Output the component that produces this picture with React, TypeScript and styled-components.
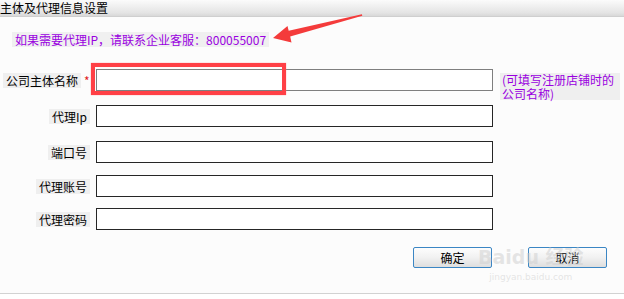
import React from "react";
import styled, { createGlobalStyle } from "styled-components";

const GlobalStyle = createGlobalStyle`
  html, body {
    margin: 0;
    padding: 0;
    background: #ffffff;
  }
  body {
    font-family: "Noto Sans CJK SC", "DejaVu Sans", sans-serif;
    font-size: 12px;
    color: #000;
  }
`;

const Window = styled.div`
  position: relative;
  width: 624px;
  height: 299px;
  overflow: hidden;
  background: #ffffff;
`;

const Panel = styled.div`
  height: 293px;
  background: #fcfcfc;
  border-bottom: 1px solid #d2d2d2;
  display: flex;
  flex-direction: column;
`;

const TitleBar = styled.div`
  height: 16px;
  line-height: 16px;
  font-size: 12px;
  background: linear-gradient(#fbfbfb, #e4e4e4 80%, #d8d8d8);
  border-bottom: 1px solid #cfcfcf;
  white-space: nowrap;
`;

const Notice = styled.div`
  align-self: flex-start;
  margin: 15px 0 0 12px;
  padding: 0 3px;
  height: 15px;
  line-height: 15px;
  font-size: 12px;
  color: #9a00e0;
  background: #f0f0f0;
  white-space: nowrap;
`;

const Form = styled.div`
  display: flex;
  flex-direction: column;
  margin-top: 22px;
`;

const Row = styled.div<{ $top: number }>`
  display: flex;
  align-items: flex-start;
  height: 22px;
  margin-top: ${(p) => p.$top}px;
`;

const LabelCell = styled.div`
  width: 90px;
  height: 22px;
  display: flex;
  align-items: center;
  justify-content: flex-end;
  flex-shrink: 0;
`;

const Label = styled.span`
  display: inline-block;
  background: #efefef;
  height: 15px;
  line-height: 15px;
  padding: 0 3px;
  font-size: 12px;
  white-space: nowrap;
`;

const Star = styled.span`
  color: #e02020;
  font-size: 12px;
  margin-left: 3px;
  width: 6px;
`;

const Input = styled.input<{ $soft?: boolean }>`
  box-sizing: border-box;
  margin: 0 0 0 6px;
  width: 397px;
  height: 22px;
  border: 1px solid ${(p) => (p.$soft ? "#7f7f7f" : "#262626")};
  background: #fff;
  outline: none;
  padding: 0 3px;
  font: inherit;
`;

const Hint = styled.div`
  margin: 4px 0 0 7px;
  width: 116px;
  padding: 0 2px;
  background: #efefef;
  color: #9a00e0;
  font-size: 12px;
  line-height: 13.5px;
`;

const Actions = styled.div`
  display: flex;
  justify-content: flex-end;
  gap: 36px;
  margin-top: 17px;
  padding-right: 17px;
`;

const Button = styled.button`
  box-sizing: border-box;
  width: 79px;
  height: 21px;
  border: 1px solid #3b86c4;
  border-radius: 2px;
  background: linear-gradient(#fdfdfd, #f1f1f1 50%, #dedede);
  font-family: inherit;
  font-size: 12px;
  color: #000;
  padding: 0;
`;

const Highlight = styled.div`
  position: absolute;
  left: 91px;
  top: 63px;
  width: 195px;
  height: 32px;
  box-sizing: border-box;
  border: 4px solid #ff4046;
  box-shadow: 0 0 1px #ff8a8e;
  pointer-events: none;
`;

const Arrow = styled.svg`
  position: absolute;
  left: 0;
  top: 0;
  pointer-events: none;
`;

const Watermark = styled.div`
  position: absolute;
  left: 478px;
  top: 246px;
  color: rgba(205, 205, 205, 0.5);
  font-family: "DejaVu Sans", "Noto Sans CJK SC", sans-serif;
  white-space: nowrap;
  text-align: center;
  pointer-events: none;
`;

const WatermarkLogo = styled.div`
  font-size: 19px;
  line-height: 22px;
  font-weight: bold;
`;

const WatermarkUrl = styled.div`
  font-size: 9px;
  line-height: 11px;
  margin-top: 4px;
`;

const fields = [
  { label: "代理Ip", top: 14 },
  { label: "端口号", top: 14 },
  { label: "代理账号", top: 12 },
  { label: "代理密码", top: 11 },
];

export default function App() {
  return (
    <>
      <GlobalStyle />
      <Window>
        <Panel>
          <TitleBar>主体及代理信息设置</TitleBar>
          <Notice>如果需要代理IP，请联系企业客服：800055007</Notice>
          <Form>
            <Row $top={0}>
              <LabelCell>
                <Label>公司主体名称</Label>
                <Star>*</Star>
              </LabelCell>
              <Input $soft />
              <Hint>(可填写注册店铺时的公司名称)</Hint>
            </Row>
            {fields.map((f) => (
              <Row key={f.label} $top={f.top}>
                <LabelCell>
                  <Label>{f.label}</Label>
                </LabelCell>
                <Input type={f.label === "代理密码" ? "password" : "text"} />
              </Row>
            ))}
          </Form>
          <Actions>
            <Button>确定</Button>
            <Button>取消</Button>
          </Actions>
        </Panel>
        <Highlight />
        <Arrow width="624" height="299" viewBox="0 0 624 299">
          <polygon
            points="273,38 287.5,26 288.7,30.8 361.9,14.2 362.3,15.8 290.2,36.6 291.5,42.4"
            fill="#f43b3b"
          />
        </Arrow>
        <Watermark>
          <WatermarkLogo>Baidu 经验</WatermarkLogo>
          <WatermarkUrl>jingyan.baidu.com</WatermarkUrl>
        </Watermark>
      </Window>
    </>
  );
}
